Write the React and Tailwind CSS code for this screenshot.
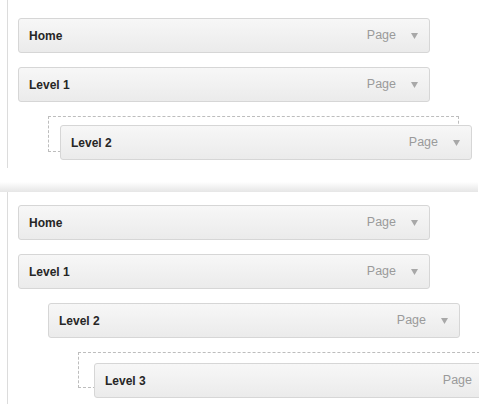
import React from 'react';

function Caret() {
  return (
    <svg width="7" height="6" viewBox="0 0 7 6" className="ml-[15px] shrink-0">
      <polygon points="0,0 7,0 3.5,6" fill="#a8a8a8" />
    </svg>
  );
}

function Item({ label }) {
  return (
    <div className="h-[35px] w-[412px] shrink-0 flex items-center rounded-[3px] border border-[#d6d6d6] bg-gradient-to-b from-[#f7f7f7] to-[#ebebeb] pl-[10px] pr-[11px]">
      <span className="font-bold text-[12px] text-[#262626]">{label}</span>
      <span className="ml-auto text-[12.5px] text-[#9a9a9a]">Page</span>
      <Caret />
    </div>
  );
}

export default function App() {
  return (
    <div
      className="w-[479px] h-[412px] overflow-hidden bg-white"
      style={{ fontFamily: '"Liberation Sans", Arial, sans-serif' }}
    >
      {/* first state: dragging Level 2 */}
      <div className="ml-[7px] h-[168px] border-l border-[#dcdcdc] pl-[10px] pt-[18px] flex flex-col gap-[14px]">
        <Item label="Home" />
        <Item label="Level 1" />
        <div className="relative ml-[30px] h-[36px] w-[411px] border border-dashed border-[#bdbdbd]">
          <div className="absolute left-[11px] top-[8px]">
            <Item label="Level 2" />
          </div>
        </div>
      </div>

      {/* divider */}
      <div className="mt-[14px] h-[10px] w-[478px] bg-gradient-to-b from-white to-[#e6e6e6]" />

      {/* second state: dragging Level 3 */}
      <div className="ml-[7px] h-[212px] border-l border-[#dcdcdc] pl-[10px] pt-[13px] flex flex-col gap-[14px]">
        <Item label="Home" />
        <Item label="Level 1" />
        <div className="ml-[30px]">
          <Item label="Level 2" />
        </div>
        <div className="relative ml-[60px] h-[36px] w-[412px] shrink-0 border border-dashed border-[#bdbdbd]">
          <div className="absolute left-[15px] top-[10px]">
            <Item label="Level 3" />
          </div>
        </div>
      </div>
    </div>
  );
}
